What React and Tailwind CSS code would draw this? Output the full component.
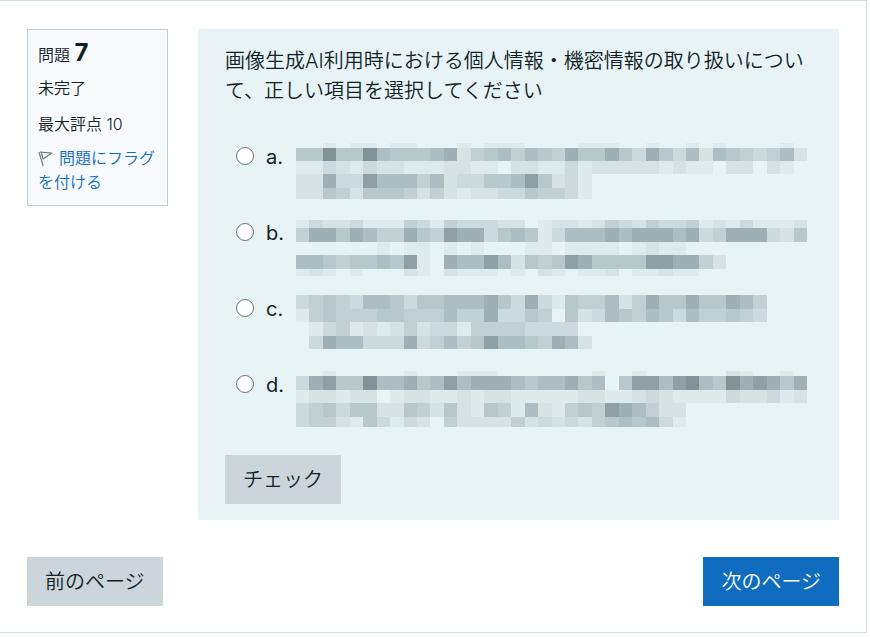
import { useState } from 'react'

// Shades for the masked answer text, from lightest to darkest
const SHADES = [
  'none',
  '#dfeaec',
  '#d6e2e4',
  '#ccdade',
  '#c2d0d4',
  '#b8c8ca',
  '#adbdc1',
  '#a0afb3',
  '#909fa3',
  '#839294',
]

// rows: top edge, bottom edge, one shade digit per cell
const CHOICES = [
  {
    key: 'a',
    rows: [
      [1, 6, '00101101100010111000011100100101000010'],
      [6, 19, '55955965556724564654755753753626543462'],
      [19, 32, '11321322111221102211312222212110220210'],
      [32, 46, '2273386664623355685231'],
      [46, 57, '2254255542421223354431'],
    ],
  },
  {
    key: 'b',
    rows: [
      [2, 10, '13223111431433322012212432433412131112'],
      [10, 24, '47757644754877356513666767776734777325'],
      [24, 37, '00000010110101000110111101211'],
      [37, 51, '66545565810766862545875555887742'],
      [51, 58, '121010002102111010210112011211'],
    ],
  },
  {
    key: 'c',
    rows: [
      [1, 15, '34543665355666753731544624755755764'],
      [15, 28, '14544455444644733540523654653644543'],
      [28, 42, '013412124233144443333'],
      [42, 55, '0376633373464586654762'],
    ],
  },
  {
    key: 'd',
    rows: [
      [1, 6, '00100000100011100000001001000000210010'],
      [6, 20, '37855966756867776566756058868965978757'],
      [20, 33, '12212201221121221111122112321111322312'],
      [33, 47, '34535522542521541621454876422'],
      [47, 57, '34421531320422224232324565631'],
    ],
  },
]

const buttonClass = 'h-[49px] px-[18px] text-[20px] leading-[30px]'

function MaskedAnswer({ rows }) {
  return (
    <svg
      viewBox="0 0 38 60"
      preserveAspectRatio="none"
      shapeRendering="crispEdges"
      aria-hidden="true"
      className="h-[60px] w-full max-w-[511px]"
    >
      {rows.map(([top, bottom, cells]) =>
        cells.split('').map((shade, col) => (
          <rect
            key={`${top}-${col}`}
            x={col}
            y={top}
            width="1"
            height={bottom - top}
            fill={SHADES[Number(shade)]}
          />
        )),
      )}
    </svg>
  )
}

function QuestionInfo() {
  return (
    <aside className="w-[141px] shrink-0 border border-[#bbcfd4] bg-[#f8fafd] p-[10px] pb-[11px] text-[16px] leading-[24px]">
      <h2 className="h-[28px] leading-[26px] font-[350]">
        問題 <span className="text-[24px] font-bold">7</span>
      </h2>
      <p className="mt-2">未完了</p>
      <p className="mt-3">最大評点 10</p>
      <a href="#flag" className="mt-[10px] block text-[#0f6cbf]">
        <svg
          viewBox="0 0 16 16"
          fill="none"
          stroke="#6a7779"
          strokeWidth="1.2"
          strokeLinejoin="round"
          className="mr-[5px] inline-block size-4 align-[-3px]"
        >
          <path d="M1 1.2 5.2 15.2M2 1 13.6 2.2 4.6 8.2M3.2 1.2 5 7.6" />
        </svg>
        問題にフラグを付ける
      </a>
    </aside>
  )
}

export default function App() {
  const [answer, setAnswer] = useState('')

  return (
    <main className="mr-[3px] border-y border-r border-[#cfe0e3] bg-white px-[27px] pt-7 pb-[26px] font-['Inter','Noto_Sans_CJK_JP',sans-serif] font-[350] text-[#0f2226]">
      <div className="flex items-start gap-[30px]">
        <QuestionInfo />

        <form
          className="min-w-0 flex-1 bg-[#e7f3f5] px-[27px] pt-[17px] pb-4"
          onSubmit={(e) => e.preventDefault()}
        >
          <fieldset>
            <legend className="text-[20px] leading-[30px]">
              画像生成AI利用時における個人情報・機密情報の取り扱いについて、正しい項目を選択してください
            </legend>
            <div className="mt-9 flex flex-col gap-4">
              {CHOICES.map(({ key, rows }) => (
                <div key={key} className="flex items-start pl-[11px]">
                  <input
                    type="radio"
                    id={`choice-${key}`}
                    name="answer"
                    value={key}
                    checked={answer === key}
                    onChange={() => setAnswer(key)}
                    className="mt-[5px] size-[18px] shrink-0 appearance-none rounded-full border border-[#6b7678] bg-white checked:border-[5px] checked:border-[#0f6cbf]"
                  />
                  <label htmlFor={`choice-${key}`} className="flex min-w-0 flex-1 pl-3">
                    <span className="w-[30px] shrink-0 text-[20px] leading-[30px] font-normal">
                      {key}.
                    </span>
                    <MaskedAnswer rows={rows} />
                  </label>
                </div>
              ))}
            </div>
          </fieldset>
          <button type="submit" className={`${buttonClass} mt-[25px] block bg-[#cbd5da]`}>
            チェック
          </button>
        </form>
      </div>

      <nav className="mt-[37px] flex justify-between">
        <button type="button" className={`${buttonClass} bg-[#cbd5da]`}>
          前のページ
        </button>
        <button type="button" className={`${buttonClass} bg-[#0f6cbf] text-white`}>
          次のページ
        </button>
      </nav>
    </main>
  )
}
